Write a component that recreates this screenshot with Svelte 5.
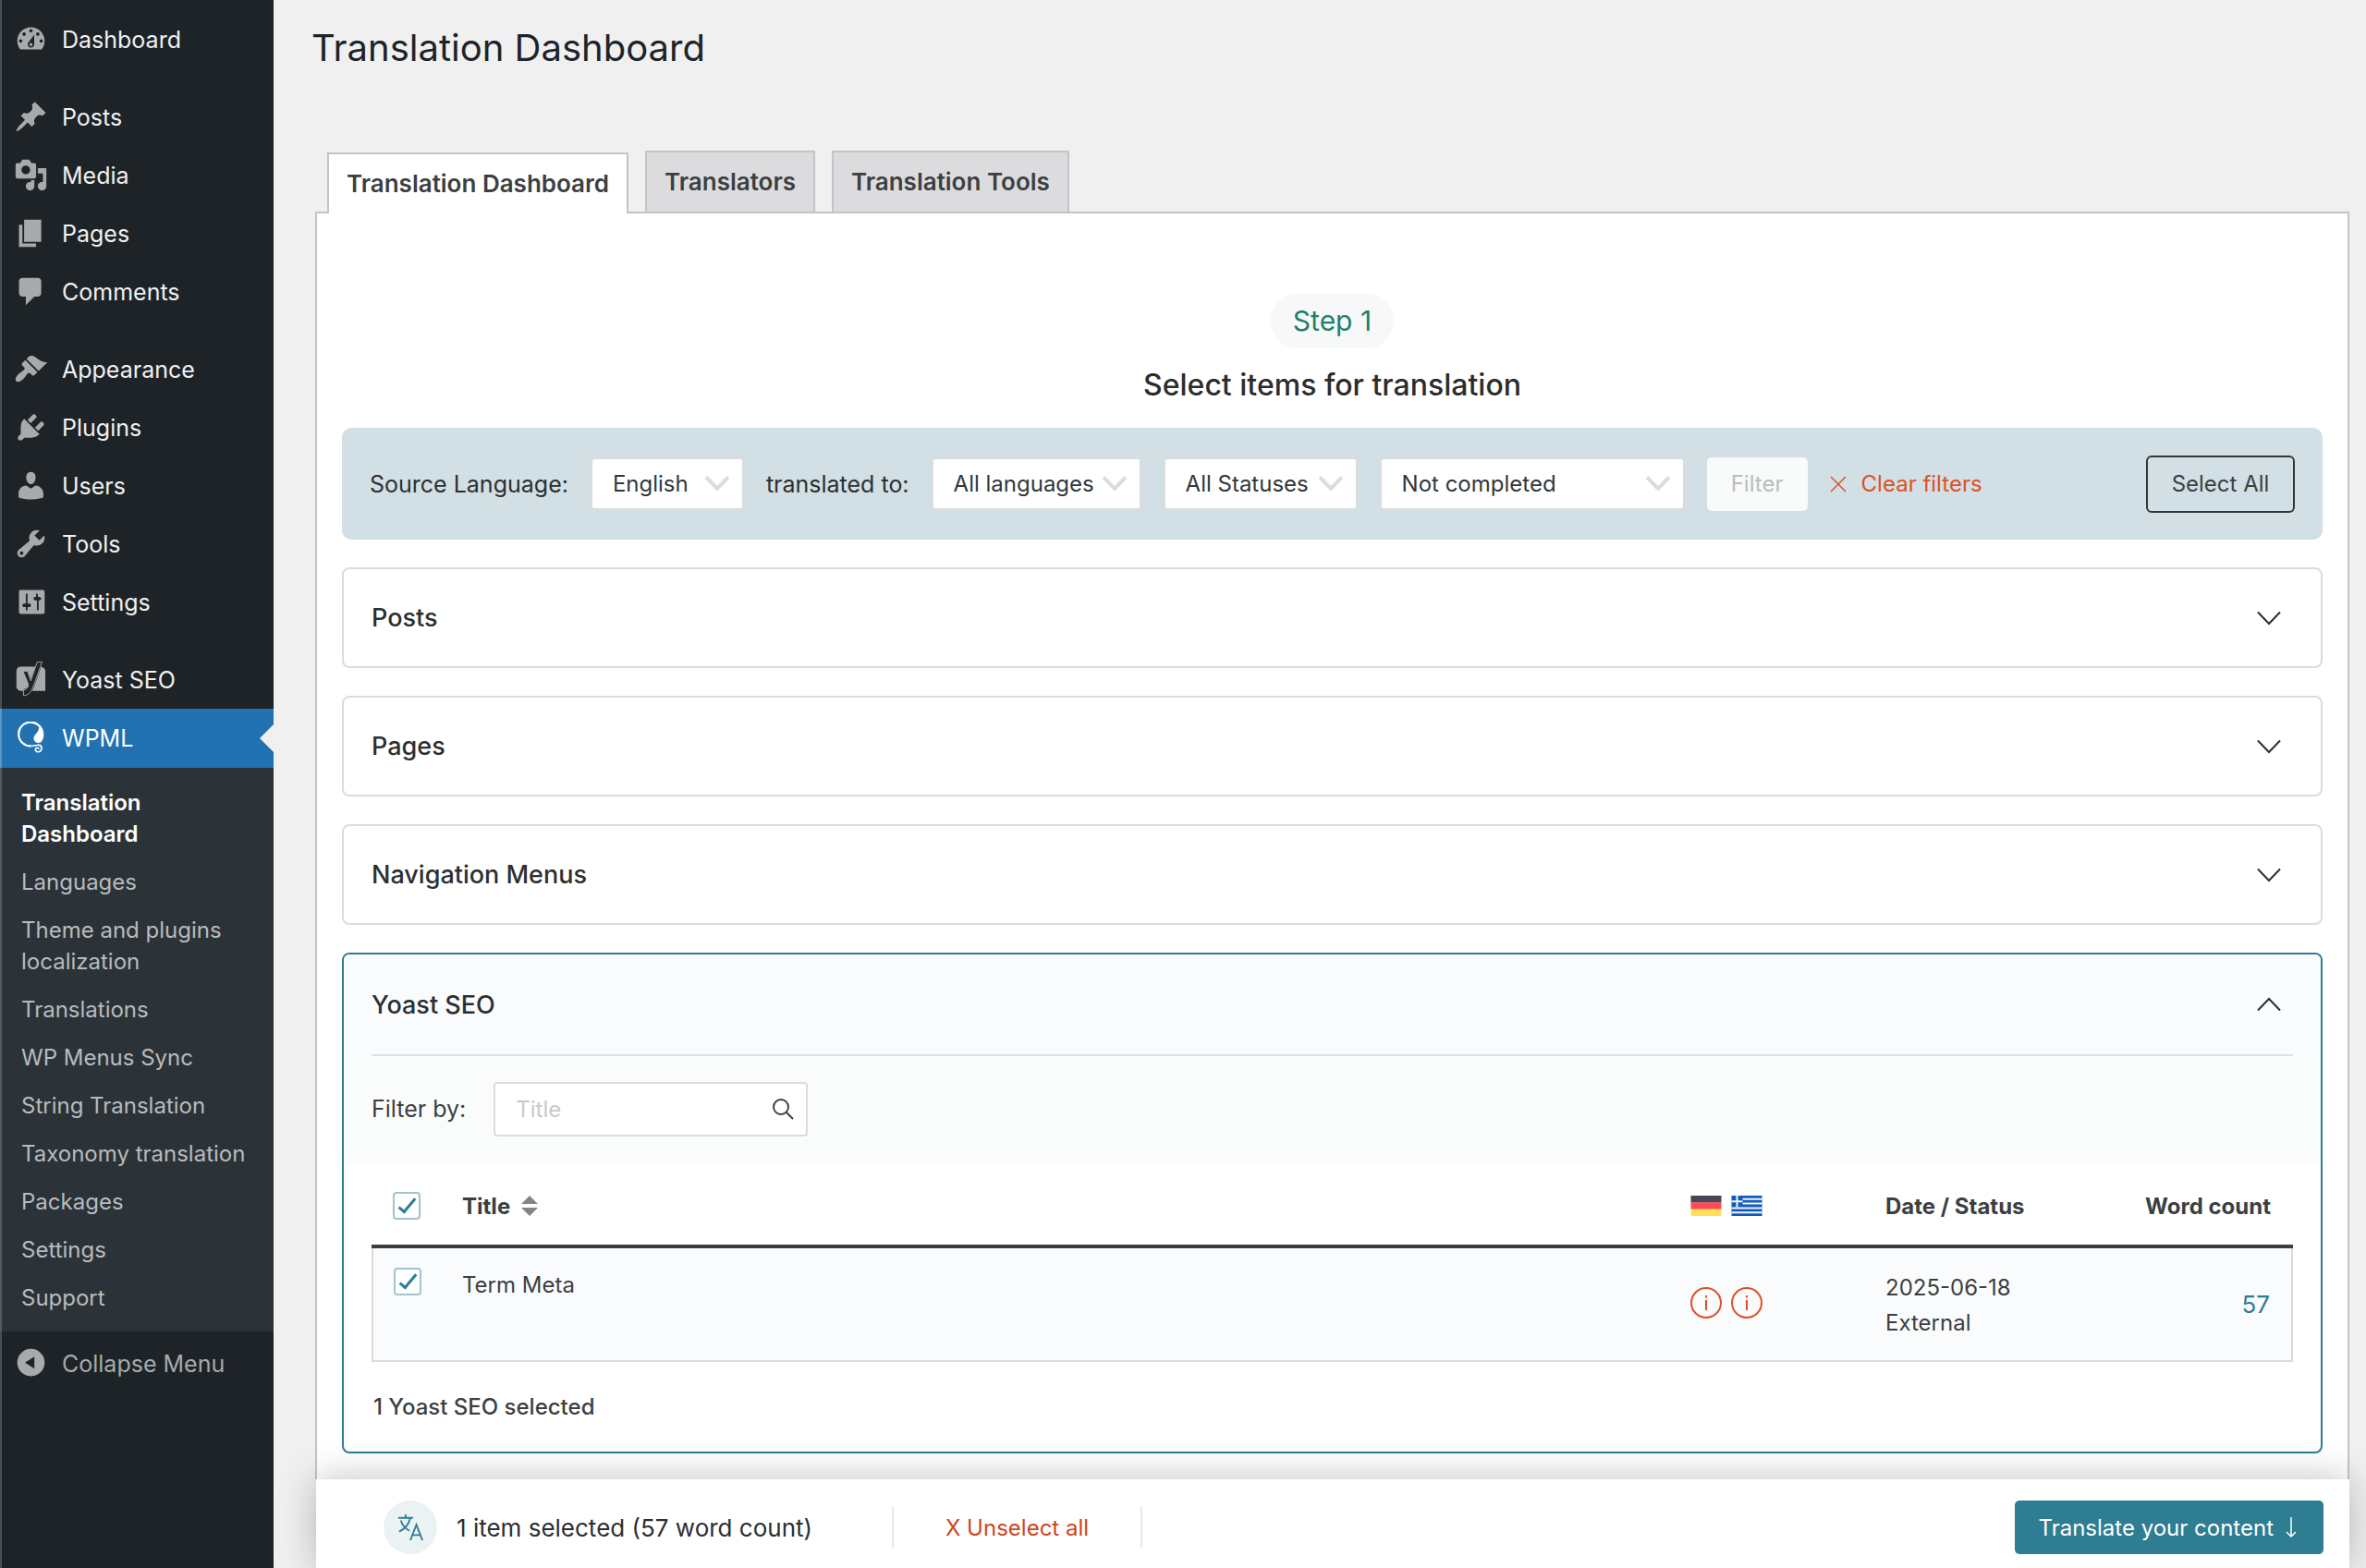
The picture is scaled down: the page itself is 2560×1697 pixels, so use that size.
<script lang="ts">
    type MenuItem = { label: string; icon: string; gap?: boolean };

    const menu: MenuItem[] = [
        {
            label: "Dashboard",
            icon: "M3.76 16h12.48c1.1-1.37 1.76-3.11 1.76-5 0-4.42-3.58-8-8-8s-8 3.58-8 8c0 1.89.66 3.63 1.76 5zM10 4c.55 0 1 .45 1 1s-.45 1-1 1-1-.45-1-1 .45-1 1-1zM6 6c.55 0 1 .45 1 1s-.45 1-1 1-1-.45-1-1 .45-1 1-1zm8 0c.55 0 1 .45 1 1s-.45 1-1 1-1-.45-1-1 .45-1 1-1zM4 10c.55 0 1 .45 1 1s-.45 1-1 1-1-.45-1-1 .45-1 1-1zm12 0c.55 0 1 .45 1 1s-.45 1-1 1-1-.45-1-1 .45-1 1-1zM11.900 7.300v5.600a1.900 1.900 0 1 1-3.600-.8zM10 12.200a.9.9 0 1 0 0 1.800.9.9 0 0 0 0-1.800z",
        },
        {
            label: "Posts",
            gap: true,
            icon: "M10.44 3.02l1.82-1.82 6.36 6.35-1.83 1.82c-1.05-.68-2.48-.57-3.41.36l-.75.75c-.92.93-1.04 2.35-.35 3.41l-1.83 1.82-2.41-2.41-2.8 2.79c-.42.42-3.38 2.71-3.8 2.29s1.86-3.39 2.28-3.81l2.79-2.79L4.1 9.36l1.83-1.82c1.05.69 2.48.57 3.4-.36l.75-.75c.93-.92 1.05-2.35.36-3.41z",
        },
        {
            label: "Media",
            icon: "M13 11V4c0-.55-.45-1-1-1h-1.67L9 1H5L3.67 3H2c-.55 0-1 .45-1 1v7c0 .55.45 1 1 1h10c.55 0 1-.45 1-1zM7 4.5c1.38 0 2.5 1.12 2.5 2.5S8.38 9.5 7 9.5 4.5 8.38 4.5 7 5.62 4.5 7 4.5zM14 6h5v10.5c0 1.38-1.12 2.5-2.5 2.5S14 17.88 14 16.5s1.12-2.5 2.5-2.5c.17 0 .34.02.5.05V9h-3V6zM10 14.05V13h2v3.5c0 1.38-1.12 2.5-2.5 2.5S7 17.88 7 16.5 8.12 14 9.5 14c.17 0 .34.02.5.05z",
        },
        { label: "Pages", icon: "M6 15V2h10v13H6zm-1 1h8v2H3V5h2v11z" },
        {
            label: "Comments",
            icon: "M5 2h9c1.1 0 2 .9 2 2v7c0 1.1-.9 2-2 2h-2l-5 5v-5H5c-1.1 0-2-.9-2-2V4c0-1.1.9-2 2-2z",
        },
        {
            label: "Appearance",
            gap: true,
            icon: "M14.48 11.06L7.41 3.99l1.5-1.5c.5-.56 2.3-.47 3.51.32 1.21.8 1.43 1.28 2.91 2.1 1.18.64 2.45 1.26 4.45.85zm-.71.71L6.7 4.7 4.93 6.47c-.39.39-.39 1.02 0 1.41l1.06 1.06c.39.39.39 1.03 0 1.42-.6.6-1.43 1.11-2.21 1.69-.35.26-.7.53-1.01.84C1.43 14.23.4 16.08 1.4 17.07c.99 1 2.84-.03 4.18-1.36.31-.31.58-.66.85-1.02.57-.78 1.08-1.61 1.69-2.21.39-.39 1.02-.39 1.41 0l1.06 1.06c.39.39 1.02.39 1.41 0z",
        },
        {
            label: "Plugins",
            icon: "M13.11 4.36L9.87 7.6 8 5.73l3.24-3.24c.35-.34 1.05-.2 1.56.32.52.51.66 1.21.31 1.55zm-8 1.77l.91-1.12 9.01 9.01-1.19.84c-.71.71-2.63 1.16-3.82 1.16H6.14L4.9 17.26c-.59.59-1.54.59-2.12 0-.59-.58-.59-1.53 0-2.12l1.24-1.24v-3.88c0-1.13.4-3.19 1.09-3.89zm7.26 3.97l3.24-3.24c.34-.35 1.04-.21 1.55.31.52.51.66 1.21.31 1.55l-3.24 3.25z",
        },
        {
            label: "Users",
            icon: "M10 9.25c-2.27 0-2.73-3.44-2.73-3.44C7 4.02 7.82 2 9.97 2c2.16 0 2.98 2.02 2.71 3.81 0 0-.41 3.44-2.68 3.44zm0 2.57L12.72 10c2.39 0 4.52 2.33 4.52 4.53v2.49s-3.65 1.13-7.24 1.13c-3.65 0-7.24-1.13-7.24-1.13v-2.49c0-2.25 1.94-4.48 4.47-4.48z",
        },
        {
            label: "Tools",
            icon: "M16.68 9.77c-1.34 1.34-3.3 1.67-4.95.99l-5.41 6.52c-.99.99-2.59.99-3.58 0s-.99-2.59 0-3.57l6.52-5.42c-.68-1.65-.35-3.61.99-4.95 1.28-1.28 3.12-1.62 4.72-1.06l-2.89 2.89 2.82 2.82 2.86-2.87c.53 1.58.18 3.39-1.08 4.65zM3.81 16.21c.4.39 1.04.39 1.43 0 .4-.4.4-1.04 0-1.43-.39-.4-1.03-.4-1.43 0-.39.39-.39 1.03 0 1.43z",
        },
        {
            label: "Settings",
            icon: "M18 16V4c0-.55-.45-1-1-1H4c-.55 0-1 .45-1 1v12c0 .55.45 1 1 1h13c.55 0 1-.45 1-1zM8 11h1c.55 0 1 .45 1 1s-.45 1-1 1H8v1.5c0 .28-.22.5-.5.5s-.5-.22-.5-.5V13H6c-.55 0-1-.45-1-1s.45-1 1-1h1V5.5c0-.28.22-.5.5-.5s.5.22.5.5V11zm5.500-2h-1c-.55 0-1-.45-1-1s.45-1 1-1h.5V5.500c0-.28.22-.5.5-.5s.5.220.5.5V7h1c.55 0 1 .45 1 1s-.45 1-1 1h-.5v5.500c0 .28-.22.500-.5.500s-.5-.22-.5-.500V9z",
        },
    ];

    const submenu = [
        "Translation Dashboard",
        "Languages",
        "Theme and plugins localization",
        "Translations",
        "WP Menus Sync",
        "String Translation",
        "Taxonomy translation",
        "Packages",
        "Settings",
        "Support",
    ];

    const tabs = ["Translation Dashboard", "Translators", "Translation Tools"];
    const sections = ["Posts", "Pages", "Navigation Menus"];

    let search = $state("");
    let rowSelected = $state(true);
</script>

{#snippet chevron(up: boolean)}
    <svg class="chevron" viewBox="0 0 26 16" fill="none" stroke="currentColor" aria-hidden="true">
        <path d={up ? "M1 14.500 13 2l12 12.500" : "M1 1.500 13 14l12-12.500"} />
    </svg>
{/snippet}

{#snippet dropdown(id: string, label: string, value: string)}
    <div class="select {id}">
        <select {id} aria-label={label}>
            <option>{value}</option>
        </select>
        {@render chevron(false)}
    </div>
{/snippet}

{#snippet info()}
    <svg class="info" viewBox="0 0 34 34" fill="none" stroke="currentColor" aria-hidden="true">
        <circle cx="17" cy="17" r="16" stroke-width="2" />
        <path d="M17 14v11" stroke-width="2" />
        <path d="M17 9v2.500" stroke-width="2" />
    </svg>
{/snippet}

<div class="layout">
    <nav class="sidebar" aria-label="Main menu">
        {#each menu as item}
            <a class="item" class:gap={item.gap} href="#{item.label.toLowerCase()}">
                <svg viewBox="0 0 20 20" fill="currentColor" fill-rule="evenodd" aria-hidden="true">
                    <path d={item.icon} />
                </svg>
                {item.label}
            </a>
        {/each}
        <a class="item gap" href="#yoast">
            <svg class="yoast" viewBox="0 0 20 20" aria-hidden="true">
                <path
                    d="M4 2.400h8.600L9.900 9.800 8.100 5H5.300l3 7.300c.2.500.2 1 0 1.500-.4 1-1 1.700-2.600 1.800v1H4A2.500 2.500 0 0 1 1.500 14V4.900A2.500 2.500 0 0 1 4 2.400zM15.900 2.600c1.500.3 2.500 1.100 2.500 2.600v11.400H10.500c.7-.9 1.100-1.900 1.600-3.200z"
                    fill="currentColor"
                />
                <path
                    d="M13.600-.2h2.900l-5 13.700c-1.200 3.400-2.600 5.700-5.800 5.900v-3.300c1.600-.2 2.300-.9 2.700-2.100.2-.6.200-1.100 0-1.600L5.400 5.100h2.500l2 5.700z"
                    fill="none"
                    stroke="currentColor"
                    stroke-width=".5"
                />
            </svg>
            Yoast SEO
        </a>
        <a class="item current" href="#wpml" aria-current="true">
            <svg viewBox="0 0 20 20" fill="none" stroke="currentColor" aria-hidden="true">
                <path d="M9.900 14.300A7 7 0 1 1 16.700 6.300" stroke-width="1.200" />
                <path
                    d="M14.700 2c1.700 1.300 2.800 3.200 2.800 5.400 0 2.700-1.200 5-3 5-1.800 0-3.100-1.400-2.900-3 .3-2.200 3.400-2.700 3.100-7.400z"
                    fill="currentColor"
                    stroke="none"
                />
                <path
                    d="M9.500 14.300c2.200.2 3.900-.9 5.400-.6 1.800.4 1.800 3.500-.4 4-1.500.2-2.500-1.300-1.500-2.200.8-.5 1.600 0 1.600.6"
                    stroke-width=".9"
                />
            </svg>
            WPML
        </a>
        <ul class="submenu">
            {#each submenu as label, i}
                <li><a class:active={i === 0} href="#sub-{i}">{label}</a></li>
            {/each}
        </ul>
        <button class="item collapse" type="button">
            <svg viewBox="0 0 20 20" fill="currentColor" fill-rule="evenodd" aria-hidden="true">
                <path d="M10 1a8 8 0 1 0 0 16 8 8 0 0 0 0-16zM12 5.500v7L6.500 9z" />
            </svg>
            Collapse Menu
        </button>
    </nav>

    <main>
        <h1>Translation Dashboard</h1>

        <div class="tabs">
            {#each tabs as tab, i}
                <a class="tab" class:active={i === 0} href="#tab-{i}">{tab}</a>
            {/each}
        </div>

        <div class="panel">
            <div class="intro">
                <span class="step">Step 1</span>
                <h2>Select items for translation</h2>
            </div>

            <form class="filters">
                <label for="source">Source Language:</label>
                {@render dropdown("source", "Source language", "English")}
                <label for="target">translated to:</label>
                {@render dropdown("target", "Translated to", "All languages")}
                {@render dropdown("statuses", "Status", "All Statuses")}
                {@render dropdown("completed", "Completion", "Not completed")}
                <button class="filter" type="button" disabled>Filter</button>
                <button class="clear" type="button">
                    <svg viewBox="0 0 18 18" fill="none" stroke="currentColor" aria-hidden="true">
                        <path d="M1 1l16 16M17 1 1 17" stroke-width="1.500" />
                    </svg>
                    Clear filters
                </button>
                <button class="select-all" type="button">Select All</button>
            </form>

            {#each sections as section}
                <section class="card">
                    <button class="card-head" type="button" aria-expanded="false">
                        {section}
                        {@render chevron(false)}
                    </button>
                </section>
            {/each}

            <section class="card open">
                <div class="card-top">
                    <button class="card-head" type="button" aria-expanded="true">
                        Yoast SEO
                        {@render chevron(true)}
                    </button>
                    <div class="search-row">
                        <label for="title-filter">Filter by:</label>
                        <div class="search">
                            <input id="title-filter" type="text" placeholder="Title" bind:value={search} />
                            <svg viewBox="0 0 24 24" fill="none" stroke="currentColor" stroke-width="2" aria-hidden="true">
                                <circle cx="10" cy="10" r="8" />
                                <path d="M16 16l7 7" />
                            </svg>
                        </div>
                    </div>
                </div>

                <table>
                    <thead>
                        <tr>
                            <th class="check">
                                <input type="checkbox" aria-label="Select all rows" bind:checked={rowSelected} />
                            </th>
                            <th>
                                <span class="sortable">
                                    Title
                                    <svg viewBox="0 0 18 22" fill="currentColor" aria-hidden="true">
                                        <path d="M9 0l9 9H0zM9 22l9-9H0z" />
                                    </svg>
                                </span>
                            </th>
                            <th class="langs">
                                <span class="pair">
                                    <svg class="flag" viewBox="0 0 33 22" role="img" aria-label="German">
                                        <path d="M0 0h33v7.500H0z" fill="#464655" />
                                        <path d="M0 7.300h33v7.400H0z" fill="#ff4b55" />
                                        <path d="M0 14.700h33V22H0z" fill="#ffe15a" />
                                    </svg>
                                    <svg class="flag" viewBox="0 0 33 22" role="img" aria-label="Greek">
                                        <path d="M0 0h33v22H0z" fill="#0f5bbf" />
                                        <path
                                            d="M12 3.700h21M12 8.500h21M0 13.400h33M0 18.300h33M0 6.200h12M6 0v12.200"
                                            stroke="#f5f5f5"
                                            stroke-width="2"
                                        />
                                    </svg>
                                </span>
                            </th>
                            <th class="date">Date / Status</th>
                            <th class="words">Word count</th>
                        </tr>
                    </thead>
                    <tbody>
                        <tr>
                            <td class="check">
                                <input type="checkbox" aria-label="Select Term Meta" bind:checked={rowSelected} />
                            </td>
                            <td>Term Meta</td>
                            <td class="langs">
                                <span class="pair">
                                    {@render info()}
                                    {@render info()}
                                </span>
                            </td>
                            <td class="date">2025-06-18<br />External</td>
                            <td class="words">57</td>
                        </tr>
                    </tbody>
                </table>

                <p class="summary">1 Yoast SEO selected</p>
            </section>
        </div>

        <footer>
            <span class="badge">
                <svg viewBox="0 0 30 30" fill="none" stroke="currentColor" stroke-width="2" aria-hidden="true">
                    <path d="M1 4h17M9.500 0v4M4 7c1.500 5 6 10 10 12M15 4C13.500 11 8 17 2 20" />
                    <path d="M15 30l7-18 7 18M17.500 24h9" />
                </svg>
            </span>
            <span class="count">1 item selected (57 word count)</span>
            <button class="unselect" type="button">X Unselect all</button>
            <button class="translate" type="button">
                Translate your content
                <svg viewBox="0 0 14 24" fill="none" stroke="currentColor" stroke-width="1.500" aria-hidden="true">
                    <path d="M7 1v21M2 17l5 5 5-5" />
                </svg>
            </button>
        </footer>
    </main>
</div>

<style>
    :global(body) {
        margin: 0;
        background: #f0f0f1;
    }

    .layout {
        display: flex;
        min-height: 100vh;
        font-family: Inter, "Liberation Sans", sans-serif;
        font-size: 24px;
        color: #3c3f41;
    }

    .layout *,
    .layout *::before,
    .layout *::after {
        box-sizing: border-box;
    }

    svg {
        display: block;
        flex: none;
    }

    button,
    input,
    select {
        font: inherit;
        color: inherit;
        margin: 0;
    }

    button {
        cursor: pointer;
    }

    /* Sidebar */
    .sidebar {
        flex: none;
        width: 296px;
        padding-top: 11px;
        background: #1d2327;
        box-shadow: inset 2px 0 #4a4f53;
    }

    .item {
        display: flex;
        align-items: center;
        gap: 15px;
        width: 100%;
        height: 63px;
        padding: 0 15px;
        border: 0;
        background: none;
        color: #f0f0f1;
        font-size: 25px;
        text-decoration: none;
        position: relative;
    }

    .item svg {
        width: 37px;
        height: 37px;
        color: #a7aaad;
    }

    .item svg.yoast {
        overflow: visible;
    }

    .item.gap {
        margin-top: 21px;
    }

    .item.current {
        height: 64px;
        background: #2271b1;
        box-shadow: inset 2px 0 #5b94c6;
        color: #fff;
    }

    .item.current svg {
        color: #fff;
    }

    .item.current::after {
        content: "";
        position: absolute;
        right: 0;
        top: 17px;
        border: 15px solid transparent;
        border-left: 0;
        border-right-color: #f0f0f1;
    }

    .submenu {
        margin: 0;
        padding: 12px 0 10px;
        list-style: none;
        background: #2c3338;
        box-shadow: inset 2px 0 #53595d;
    }

    .submenu a {
        display: block;
        padding: 9px 23px;
        line-height: 34px;
        color: #b8bbbe;
        text-decoration: none;
    }

    .submenu a.active {
        color: #fff;
        font-weight: 600;
    }

    .item.collapse {
        height: 70px;
        color: #a7aaad;
    }

    /* Content */
    main {
        flex: 1;
        min-width: 0;
        display: flex;
        flex-direction: column;
        padding: 0 18px 0 41px;
    }

    h1 {
        margin: 26px 0 0;
        font-size: 40px;
        line-height: 52px;
        font-weight: 400;
        color: #1d2327;
    }

    .tabs {
        display: flex;
        align-items: flex-end;
        gap: 18px;
        margin-top: 85px;
        padding-left: 17px;
    }

    .tab {
        padding: 0 19px;
        border: 2px solid #c3c4c7;
        border-bottom: 0;
        background: #dcdcde;
        line-height: 64px;
        font-size: 26px;
        font-weight: 600;
        color: #3c3f41;
        text-decoration: none;
    }

    .tab.active {
        background: #fff;
        margin-bottom: -2px;
        position: relative;
    }

    .panel {
        flex: 1;
        margin-left: 4px;
        padding: 87px 27px 26px;
        border: 2px solid #c3c4c7;
        border-bottom: 0;
        background: #fff;
    }

    .intro {
        display: flex;
        flex-direction: column;
        align-items: center;
        margin-bottom: 24px;
    }

    .step {
        padding: 0 24px;
        border-radius: 30px;
        background: #f7f8f9;
        color: #1e8068;
        font-size: 30px;
        line-height: 59px;
    }

    h2 {
        margin: 18px 0 0;
        font-size: 32px;
        line-height: 44px;
        font-weight: 500;
        color: #2c2c2c;
    }

    .filters {
        display: flex;
        align-items: center;
        gap: 24px;
        height: 121px;
        padding: 0 30px;
        border-radius: 10px;
        background: #d2dfe4;
    }

    .filters label {
        font-size: 25px;
        color: #2c2f31;
    }

    .select {
        position: relative;
    }

    .select select {
        appearance: none;
        width: 100%;
        height: 57px;
        padding: 0 22px;
        border: 2px solid #dcdcde;
        border-radius: 4px;
        background: #fff;
        color: #32373c;
    }

    .select .chevron {
        position: absolute;
        top: 20px;
        right: 16px;
        color: #dcdcde;
        stroke-width: 4;
        pointer-events: none;
    }

    .source {
        width: 166px;
    }

    .target {
        width: 227px;
    }

    .statuses {
        width: 210px;
    }

    .completed {
        width: 330px;
    }

    .chevron {
        width: 26px;
        height: 16px;
        stroke-width: 2;
    }

    .filter {
        width: 109px;
        height: 58px;
        padding: 0;
        border: 0;
        border-radius: 5px;
        background: #f9fbfa;
        color: #b9bcbc;
    }

    .clear {
        display: flex;
        align-items: center;
        gap: 16px;
        padding: 0;
        border: 0;
        background: none;
        color: #dd5126;
    }

    .clear svg {
        width: 18px;
        height: 18px;
    }

    .select-all {
        width: 161px;
        height: 62px;
        margin-left: auto;
        padding: 0;
        border: 2px solid #333638;
        border-radius: 6px;
        background: none;
    }

    /* Accordion */
    .card {
        margin-top: 30px;
        border: 2px solid #dcdcde;
        border-radius: 8px;
        background: #fff;
    }

    .card-head {
        display: flex;
        align-items: center;
        justify-content: space-between;
        width: 100%;
        height: 105px;
        padding: 0 43px 0 30px;
        border: 0;
        background: none;
        font-size: 27px;
        font-weight: 500;
        color: #2c2f31;
    }

    .card.open {
        padding-bottom: 30px;
        border-color: #2f7d92;
    }

    .card-top {
        border-radius: 6px 6px 0 0;
        background: linear-gradient(#fafbfd 110px, #fafcfb 130px);
        padding: 0 30px;
    }

    .card-top .card-head {
        height: 110px;
        padding: 0 13px 0 0;
        border-bottom: 2px solid #d5e2e8;
    }

    .search-row {
        display: flex;
        align-items: center;
        gap: 30px;
        height: 114px;
        font-size: 25px;
    }

    .search {
        position: relative;
    }

    .search input {
        display: block;
        width: 340px;
        height: 59px;
        padding: 0 50px 0 22px;
        border: 2px solid #dcdcde;
        border-radius: 4px;
        background: #fff;
        font-size: 24px;
    }

    .search input::placeholder {
        color: #c8cacc;
        opacity: 1;
    }

    .search svg {
        position: absolute;
        right: 15px;
        top: 17px;
        width: 24px;
        height: 24px;
    }

    table {
        width: calc(100% - 60px);
        margin: 0 30px;
        border-collapse: collapse;
        text-align: left;
    }

    th {
        height: 92px;
        padding: 6px 0 0;
        font-weight: 700;
    }

    thead tr {
        border-bottom: 4px solid #3c3f41;
    }

    tbody tr {
        border: 2px solid #d8dcde;
        border-top: 0;
        background: #fafbfc;
    }

    td {
        height: 124px;
        padding: 21px 0 0;
        line-height: 38px;
        vertical-align: top;
    }

    .check {
        width: 97px;
        padding-left: 22px;
    }

    .check input {
        appearance: none;
        display: block;
        width: 30px;
        height: 30px;
        border: 2px solid #a3c3cd;
        border-radius: 4px;
        background: #fff;
    }

    .check input:checked::before {
        content: "";
        display: block;
        width: 9px;
        height: 20px;
        margin: 1px 0 0 9px;
        border: solid #2f7d92;
        border-width: 0 3px 3px 0;
        transform: rotate(40deg);
    }

    .sortable {
        display: flex;
        align-items: center;
        gap: 12px;
    }

    .sortable svg {
        width: 18px;
        height: 22px;
        color: #828586;
    }

    .langs {
        width: 211px;
    }

    td.langs {
        padding-top: 42px;
        color: #dd5126;
    }

    .pair {
        display: flex;
        gap: 10px;
    }

    .flag {
        width: 34px;
        height: 22px;
    }

    .info {
        width: 34px;
        height: 34px;
    }

    .date {
        width: 210px;
    }

    td.date {
        padding-top: 24px;
    }

    .words {
        width: 230px;
        padding-right: 23px;
        text-align: right;
    }

    td.words {
        padding-top: 42px;
        font-size: 26px;
        color: #2f7d92;
    }

    .summary {
        margin: 31px 32px 0;
        line-height: 36px;
        font-weight: 500;
    }

    footer {
        position: sticky;
        bottom: 0;
        display: flex;
        align-items: center;
        height: 96px;
        margin: 0 0 0 5px;
        padding: 8px 28px 0 73px;
        background: #fff;
        box-shadow: 0 0 40px rgba(0, 0, 0, 0.25);
        color: #2c2f31;
        font-size: 26px;
    }

    .badge {
        display: grid;
        place-items: center;
        width: 58px;
        height: 58px;
        border-radius: 50%;
        background: #eaf2f4;
        color: #2f7d92;
    }

    .badge svg {
        width: 28px;
        height: 28px;
    }

    .count {
        margin: 0 86px 0 21px;
    }

    .unselect {
        height: 44px;
        padding: 0 56px;
        border: solid #e6e8ea;
        border-width: 0 2px;
        background: none;
        color: #cf4520;
        font-size: 24px;
    }

    .translate {
        display: flex;
        align-items: center;
        gap: 12px;
        height: 58px;
        margin-left: auto;
        padding: 0 28px 0 26px;
        border: 0;
        border-radius: 5px;
        background: #2f7d92;
        color: #fff;
        font-size: 24px;
    }

    .translate svg {
        width: 14px;
        height: 24px;
    }
</style>
